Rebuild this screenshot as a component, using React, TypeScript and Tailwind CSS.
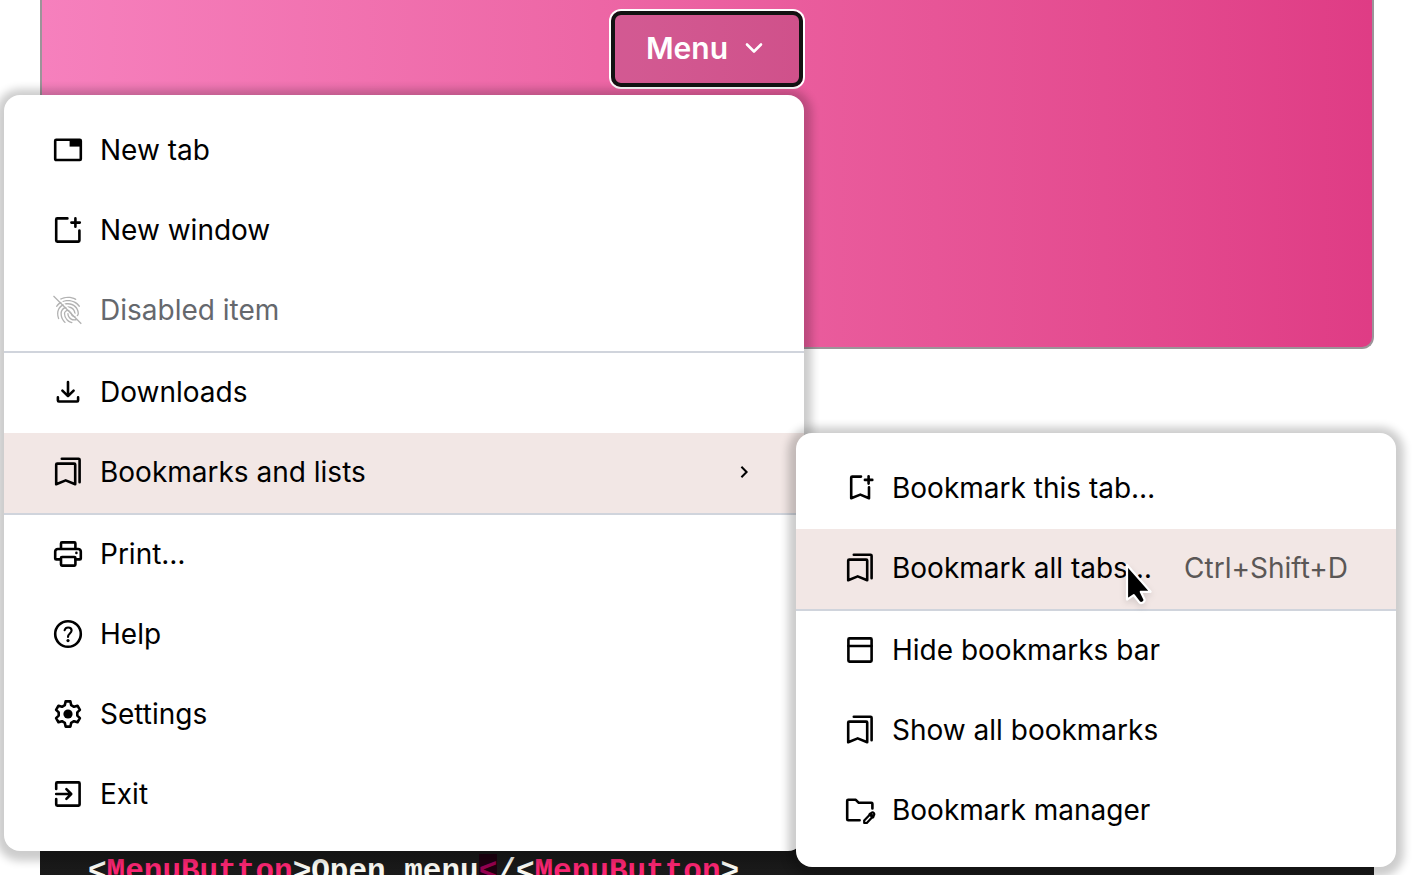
import type { ReactNode } from "react";
import { MdFingerprint } from "react-icons/md";

function Icon({ children }: { children: ReactNode }) {
  return (
    <svg
      viewBox="0 0 32 32"
      className="size-8 shrink-0"
      fill="none"
      stroke="currentColor"
      strokeWidth="2.6"
      strokeLinecap="round"
      strokeLinejoin="round"
      aria-hidden="true"
    >
      {children}
    </svg>
  );
}

const TabIcon = () => (
  <Icon>
    <rect x="3.2" y="5.8" width="25.6" height="20.2" rx="1" />
    <path d="M17.6 5.8h11.2v6.8H17.6z" fill="currentColor" stroke="none" />
  </Icon>
);

const WindowIcon = () => (
  <Icon>
    <path d="M15.4 4.4H5.2a1 1 0 0 0-1 1v21.2a1 1 0 0 0 1 1h21.2a1 1 0 0 0 1-1V16.6M19.4 8.6h8.4M23.4 4.4v8.4" />
  </Icon>
);

const FingerprintOffIcon = () => (
  <span className="relative block size-8 shrink-0 text-[#b2b2b2]">
    <MdFingerprint className="size-8" aria-hidden="true" />
    <svg viewBox="0 0 32 32" className="absolute inset-0 size-8" aria-hidden="true">
      <path d="M3 1l28 28" stroke="#fff" strokeWidth="1.6" />
      <path d="M1.5 2l27.8 27.8" stroke="currentColor" strokeWidth="1.3" />
    </svg>
  </span>
);

const DownloadIcon = () => (
  <Icon>
    <path d="M16 6v14M10.4 14.6 16 20.2l5.6-5.6M5.9 21.4v3.1a1 1 0 0 0 1 1h18.2a1 1 0 0 0 1-1v-3.1" />
  </Icon>
);

const BookmarksIcon = () => (
  <Icon>
    <path d="M4.2 28.2V8.6a1 1 0 0 1 1-1h17a1 1 0 0 1 1 1v19.6l-9.5-3.8zM9.8 2.8h16.8a1 1 0 0 1 1 1v22.4" />
  </Icon>
);

const PrintIcon = () => (
  <Icon>
    <path d="M9 10.8V5.4a1 1 0 0 1 1-1h12.4a1 1 0 0 1 1 1v5.4M8.6 21.4H4.2a1 1 0 0 1-1-1v-6.8a2.6 2.6 0 0 1 2.6-2.6h20.4a2.6 2.6 0 0 1 2.6 2.6v6.8a1 1 0 0 1-1 1h-4.4" />
    <rect x="9" y="19" width="14.4" height="8.6" rx="1" />
    <circle cx="24.4" cy="14.9" r="1.3" fill="currentColor" stroke="none" />
  </Icon>
);

const HelpIcon = () => (
  <Icon>
    <circle cx="16" cy="16" r="12.8" />
    <path d="M12.6 12.2c.5-1.7 1.8-2.7 3.5-2.7 2 0 3.5 1.3 3.5 3.1 0 2.8-3.6 3.2-3.6 6.3" strokeWidth="2.1" />
    <circle cx="16" cy="22.6" r="1.6" fill="currentColor" stroke="none" />
  </Icon>
);

const SettingsIcon = () => (
  <Icon>
    <path d="M13.6 3.4h4.8l.8 3.8 2.8 1.6 3.5-1.1 2.4 4.2-2.6 2.5v3.2l2.6 2.5-2.4 4.2-3.5-1.1-2.8 1.6-.8 3.8h-4.8l-.8-3.8-2.8-1.6-3.5 1.1-2.4-4.2 2.6-2.5v-3.2l-2.6-2.5 2.4-4.2 3.5 1.1 2.8-1.6z" />
    <circle cx="16" cy="16" r="4.6" fill="currentColor" stroke="none" />
  </Icon>
);

const ExitIcon = () => (
  <Icon>
    <path d="M4.2 11V5.4a1 1 0 0 1 1-1h21.4a1 1 0 0 1 1 1v21.2a1 1 0 0 1-1 1H5.2a1 1 0 0 1-1-1V21M4.2 16h14.6M14.4 11.2l4.8 4.8-4.8 4.8" />
  </Icon>
);

const BookmarkAddIcon = () => (
  <Icon>
    <path d="M17 4.6H8.2a1 1 0 0 0-1 1v20.6l9.1-3.6 8.7 3.6V15.2M20.9 7.9h7.4M24.6 4.2v7.4" />
  </Icon>
);

const BarIcon = () => (
  <Icon>
    <rect x="4.4" y="4.4" width="23.2" height="23.2" rx="1" />
    <path d="M4.4 12h23.2" />
  </Icon>
);

const FolderEditIcon = () => (
  <Icon>
    <path d="M15.6 26.2H4.2a1 1 0 0 1-1-1V6.8a1 1 0 0 1 1-1h7.6l3 3h12.6a1 1 0 0 1 1 1v4.6" />
    <path d="M20.2 29v-2.6l7.2-7.4a1.6 1.6 0 0 1 2.4 2.4L22.8 29z" strokeWidth="2.2" />
    <path d="m26.2 20.2 2.6 2.6" strokeWidth="3.4" />
  </Icon>
);

type Item = {
  label: string;
  icon: ReactNode;
  shortcut?: string;
  disabled?: boolean;
  active?: boolean;
  submenu?: boolean;
};

const mainGroups: Item[][] = [
  [
    { label: "New tab", icon: <TabIcon /> },
    { label: "New window", icon: <WindowIcon /> },
    { label: "Disabled item", icon: <FingerprintOffIcon />, disabled: true },
  ],
  [
    { label: "Downloads", icon: <DownloadIcon /> },
    { label: "Bookmarks and lists", icon: <BookmarksIcon />, active: true, submenu: true },
  ],
  [
    { label: "Print…", icon: <PrintIcon /> },
    { label: "Help", icon: <HelpIcon /> },
    { label: "Settings", icon: <SettingsIcon /> },
    { label: "Exit", icon: <ExitIcon /> },
  ],
];

const bookmarkGroups: Item[][] = [
  [
    { label: "Bookmark this tab…", icon: <BookmarkAddIcon /> },
    { label: "Bookmark all tabs…", icon: <BookmarksIcon />, shortcut: "Ctrl+Shift+D", active: true },
  ],
  [
    { label: "Hide bookmarks bar", icon: <BarIcon /> },
    { label: "Show all bookmarks", icon: <BookmarksIcon /> },
    { label: "Bookmark manager", icon: <FolderEditIcon /> },
  ],
];

function MenuItem({ item }: { item: Item }) {
  return (
    <button
      type="button"
      role="menuitem"
      disabled={item.disabled}
      aria-haspopup={item.submenu ? "menu" : undefined}
      className={`flex h-20 w-full items-center gap-4 px-12 pb-[2px] text-left ${
        item.active ? "bg-[#f2e7e5]" : ""
      } ${item.disabled ? "text-[#65686d]" : "text-black"}`}
    >
      {item.icon}
      <span className="grow whitespace-nowrap">{item.label}</span>
      {item.shortcut && <kbd className="font-[Inter,sans-serif] whitespace-nowrap text-[#5b5756]">{item.shortcut}</kbd>}
      {item.submenu && (
        <svg viewBox="0 0 24 24" className="size-6 shrink-0" fill="none" stroke="currentColor" strokeWidth="2" aria-hidden="true">
          <path d="m9.4 6.8 5.2 5.2-5.2 5.2" />
        </svg>
      )}
    </button>
  );
}

function MenuPanel({ groups, label, className }: { groups: Item[][]; label: string; className: string }) {
  return (
    <div
      role="menu"
      aria-label={label}
      className={`absolute divide-y-2 divide-[#d0d4dc] rounded-2xl bg-white py-4 text-[28px] leading-10 shadow-[0_2px_8px_8px_rgba(0,0,0,0.2)] ${className}`}
    >
      {groups.map((group, i) => (
        <div key={i} role="group">
          {group.map((item) => (
            <MenuItem key={item.label} item={item} />
          ))}
        </div>
      ))}
    </div>
  );
}

function Cursor() {
  return (
    <svg viewBox="0 0 32 44" className="pointer-events-none absolute top-[128px] left-[328px] h-11 w-8 drop-shadow-md" aria-hidden="true">
      <path
        d="M3 4v34.6l6.8-4.4 5.6 7.2c1.8 1.6 6-.4 5-3.2l-3.6-7.4h9.8z"
        fill="#000"
        stroke="#fff"
        strokeWidth="2.2"
        strokeLinejoin="round"
      />
    </svg>
  );
}

export default function App() {
  return (
    <div className="h-screen overflow-hidden bg-white pr-[38px] pl-10 font-[Inter,sans-serif]">
      <section className="flex h-[349px] justify-center rounded-b-xl border-2 border-t-0 border-[#9c9499] bg-linear-to-r from-[#f680bd] to-[#df3c85] pt-[11px]">
        <div className="relative z-10 h-19">
          <button
            type="button"
            aria-haspopup="menu"
            aria-expanded="true"
            className="flex h-19 w-48 items-center justify-center gap-4 rounded-[10px] border-4 border-[#121212] bg-black/11 pr-1 pb-[2px] text-[30px] font-semibold text-white shadow-[0_0_0_2px_#fff]"
          >
            Menu
            <svg viewBox="0 0 20 20" className="size-5" fill="none" stroke="currentColor" strokeWidth="2.6" strokeLinecap="round" strokeLinejoin="round" aria-hidden="true">
              <path d="m3 6.5 7 7 7-7" />
            </svg>
          </button>
          <MenuPanel groups={mainGroups} label="Menu" className="top-[84px] right-[-1px] w-200" />
          <div className="absolute top-[422px] left-[185px] w-150">
            <MenuPanel groups={bookmarkGroups} label="Bookmarks and lists" className="top-0 left-0 w-full" />
            <Cursor />
          </div>
        </div>
      </section>
      <pre className="mt-25 bg-linear-to-b from-[#121212] to-[#1a1a1a] px-12 pt-[405px] font-['Liberation_Mono',monospace] text-[31px] leading-9 font-bold text-[#f8f8f2]">
        <code className="font-['Liberation_Mono',monospace]">
          &lt;<span className="text-[#f92672]">MenuButton</span>&gt;Open menu
          <span className="bg-[#1e0010] text-[#960050]">&lt;</span>/&lt;
          <span className="text-[#f92672]">MenuButton</span>&gt;
        </code>
      </pre>
    </div>
  );
}
